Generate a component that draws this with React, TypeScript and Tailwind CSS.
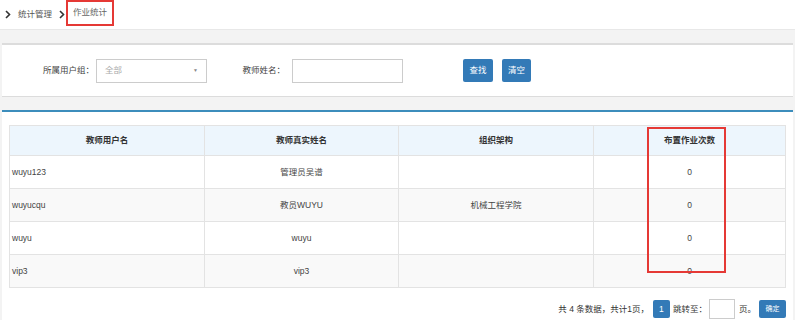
import React from 'react';

const rows = [
  { user: 'wuyu123', name: '管理员吴谱', org: '', count: 0 },
  { user: 'wuyucqu', name: '教员WUYU', org: '机械工程学院', count: 0 },
  { user: 'wuyu', name: 'wuyu', org: '', count: 0 },
  { user: 'vip3', name: 'vip3', org: '', count: 0 },
];

function Chevron() {
  return (
    <svg width="6" height="9" viewBox="0 0 6 9" className="shrink-0">
      <path d="M1 1 L4.5 4.5 L1 8" fill="none" stroke="#333" strokeWidth="1.6" />
    </svg>
  );
}

export default function App() {
  return (
    <div
      className="relative w-[795px] h-[320px] overflow-hidden bg-[#f3f3f3] text-[8.5px] text-[#444]"
      style={{ fontFamily: '"Liberation Sans", "Noto Sans CJK SC", sans-serif' }}
    >
      {/* Breadcrumb */}
      <div className="h-[30px] bg-white border-b border-[#e8e8e8] flex items-center pl-[5px]">
        <Chevron />
        <span className="ml-[7px] text-[#555]">统计管理</span>
        <span className="ml-[7px] mr-[1px]"><Chevron /></span>
        <span className="h-[26px] -mt-[4px] w-[48px] pl-[5px] border-2 border-[#e53935] flex items-center text-[#666]">作业统计</span>
      </div>

      {/* Search panel */}
      <div className="mt-[13px] mx-[2px] h-[54px] bg-white border-t-2 border-[#3c8dbc] border-b border-[#dcdcdc] flex items-center whitespace-nowrap">
        <span className="ml-[41px] w-[48px] text-right text-[#444]">所属用户组：</span>
        <div className="ml-[5px] w-[111px] h-[24px] border border-[#ccc] flex items-center justify-between px-[8px] text-[#aaa]">
          <span>全部</span>
          <span className="text-[5px] text-[#888]">▼</span>
        </div>
        <span className="ml-[30px] w-[48px] text-right text-[#444]">教师姓名：</span>
        <div className="ml-[7px] w-[111px] h-[24px] border border-[#ccc]" />
        <button className="ml-[60px] w-[30px] h-[23px] bg-[#337ab7] text-white rounded-[2px]">查找</button>
        <button className="ml-[9px] w-[29px] h-[23px] bg-[#337ab7] text-white rounded-[2px]">清空</button>
      </div>

      {/* Table panel */}
      <div className="mt-[13px] mx-[2px] h-[220px] bg-white border-t-2 border-[#3c8dbc] pt-[13px] px-[7px]">
        <div className="relative w-[776px]">
          <table className="w-full border-collapse table-fixed">
            <colgroup>
              <col className="w-[195px]" />
              <col className="w-[194px]" />
              <col className="w-[195px]" />
              <col className="w-[192px]" />
            </colgroup>
            <thead>
              <tr className="h-[30px] bg-[#edf6fd]">
                {['教师用户名', '教师真实姓名', '组织架构', '布置作业次数'].map((h) => (
                  <th key={h} className="border border-[#e3e3e3] font-bold text-center text-[#333]">{h}</th>
                ))}
              </tr>
            </thead>
            <tbody>
              {rows.map((r, i) => (
                <tr key={r.user} className={i % 2 === 1 ? 'h-[33px] bg-[#f9f9f9]' : 'h-[33px] bg-white'}>
                  <td className="border border-[#e3e3e3] pl-[2px] text-left">{r.user}</td>
                  <td className="border border-[#e3e3e3] text-center">{r.name}</td>
                  <td className="border border-[#e3e3e3] text-center">{r.org}</td>
                  <td className="border border-[#e3e3e3] text-center">{r.count}</td>
                </tr>
              ))}
            </tbody>
          </table>
          {/* highlight box */}
          <div className="absolute left-[638px] top-[2px] w-[79px] h-[146px] border-2 border-[#e53935]" />
        </div>

        {/* Pagination */}
        <div className="mt-[11px] flex items-center justify-end text-[#333] whitespace-nowrap">
          <span>共 4 条数据，共计1页，</span>
          <span className="ml-[4px] w-[17px] h-[18px] bg-[#337ab7] text-white flex items-center justify-center rounded-[2px]">1</span>
          <span className="ml-[3px]">跳转至：</span>
          <div className="ml-[2px] w-[26px] h-[20px] border border-[#ccc]" />
          <span className="ml-[4px]">页。</span>
          <button className="ml-[3px] w-[27px] h-[18px] bg-[#337ab7] text-white rounded-[2px] text-[7px]">确定</button>
        </div>
      </div>
    </div>
  );
}
